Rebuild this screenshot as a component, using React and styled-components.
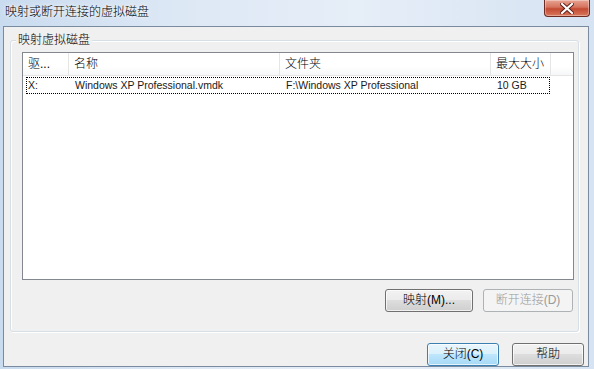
import React from "react";
import styled, { createGlobalStyle } from "styled-components";

const GlobalStyle = createGlobalStyle`
  html, body {
    margin: 0;
    padding: 0;
    overflow: hidden;
  }
  body {
    font-family: "Liberation Sans", "Noto Sans CJK SC", sans-serif;
    font-size: 12px;
    font-weight: 300;
    color: #000000;
  }
`;

const Window = styled.div`
  width: 594px;
  height: 369px;
  display: flex;
  flex-direction: column;
  background: linear-gradient(90deg, #c9dbef 0%, #dde8f5 30%, #e6eef8 60%, #d6e3f2 100%);
  overflow: hidden;
`;

const TitleBar = styled.div`
  height: 26px;
  display: flex;
  justify-content: space-between;
  align-items: flex-start;
  flex-shrink: 0;
`;

const TitleText = styled.div`
  padding-left: 5px;
  line-height: 24px;
  font-size: 12px;
  text-shadow: 0 0 6px #ffffff, 0 0 3px #ffffff;
`;

const CloseButton = styled.div`
  width: 44px;
  height: 16px;
  margin-right: 4px;
  border: 1px solid #6b2a22;
  border-top: none;
  border-radius: 0 0 4px 4px;
  background: linear-gradient(180deg, #e8a493 0%, #d4735e 45%, #c24a32 55%, #d9785c 100%);
  box-shadow: inset 0 0 0 1px rgba(255, 255, 255, 0.35);
  display: flex;
  align-items: center;
  justify-content: center;
`;

const Client = styled.div`
  margin: 0 5px 0 3px;
  height: 339px;
  border: 1px solid #7a8ba0;
  background: #f0f0f0;
  display: flex;
  flex-direction: column;
  flex-shrink: 0;
`;

const GroupBox = styled.div`
  position: relative;
  margin: 13px 9px 0 6px;
  height: 282px;
  border: 1px solid #d5dfe5;
  border-radius: 3px;
  box-shadow: inset 1px 1px 0 #ffffff, 1px 1px 0 #ffffff;
  padding: 11px 4px 11px 11px;
  display: flex;
  flex-direction: column;
`;

const GroupLabel = styled.div`
  position: absolute;
  top: -8px;
  left: 5px;
  padding: 0 2px;
  background: #f0f0f0;
  line-height: 14px;
  font-size: 12px;
`;

const ListView = styled.div`
  height: 226px;
  border: 1px solid #828790;
  background: #ffffff;
  display: flex;
  flex-direction: column;
`;

const HeaderRow = styled.div`
  display: flex;
  height: 22px;
  border-bottom: 1px solid #e5e5e5;
  background: linear-gradient(180deg, #ffffff 0%, #ffffff 60%, #f6f7f8 100%);
`;

const HeaderCell = styled.div`
  width: ${(p) => p.w}px;
  flex-shrink: 0;
  padding-left: 5px;
  box-sizing: border-box;
  border-right: 1px solid #e5e5e5;
  line-height: 23px;
  font-size: 12px;
  white-space: nowrap;
  overflow: hidden;
`;

const HeaderFill = styled.div`
  flex: 1;
`;

const Row = styled.div`
  display: flex;
  margin: 1px 0 0 3px;
  width: 524px;
  height: 17px;
  box-sizing: border-box;
  border: 1px dotted #000000;
`;

const Cell = styled.div`
  width: ${(p) => p.w}px;
  flex-shrink: 0;
  padding-left: ${(p) => p.pl || 5}px;
  box-sizing: border-box;
  line-height: 15px;
  font-size: 10.5px;
  color: #1a1a1a;
  white-space: nowrap;
  overflow: hidden;
`;

const ButtonRow = styled.div`
  display: flex;
  justify-content: flex-end;
  gap: 10px;
  margin-top: 9px;
  margin-right: 1px;
`;

const Button = styled.div`
  width: ${(p) => p.w || 88}px;
  height: 23px;
  box-sizing: border-box;
  border: 1px solid ${(p) => (p.disabled ? "#adb2b5" : p.primary ? "#3c7fb1" : "#707070")};
  border-radius: 3px;
  background: ${(p) =>
    p.disabled
      ? "#f4f4f4"
      : p.primary
      ? "linear-gradient(180deg, #eaf6fd 0%, #d9f0fc 50%, #bee6fd 50%, #a7d9f5 100%)"
      : "linear-gradient(180deg, #f2f2f2 0%, #ebebeb 50%, #dddddd 50%, #cfcfcf 100%)"};
  box-shadow: inset 0 0 0 1px ${(p) => (p.disabled ? "#f4f4f4" : "rgba(255,255,255,0.7)")};
  color: ${(p) => (p.disabled ? "#9a9a9a" : "#000000")};
  font-size: 12px;
  line-height: 21px;
  text-align: center;
  white-space: nowrap;
`;

const Footer = styled.div`
  display: flex;
  justify-content: flex-end;
  gap: 13px;
  margin-top: 11px;
  padding-right: 4px;
`;

const columns = [
  { w: 46, title: "驱..." },
  { w: 211, title: "名称" },
  { w: 211, title: "文件夹" },
  { w: 60, title: "最大大小" },
];

const rows = [
  { drive: "X:", name: "Windows XP Professional.vmdk", folder: "F:\\Windows XP Professional", size: "10 GB" },
];

function CloseGlyph() {
  return (
    <svg width="14" height="11" viewBox="0 0 14 11">
      <path
        d="M2 1 L12 10 M12 1 L2 10"
        stroke="#5a1d15"
        strokeWidth="4"
        strokeLinecap="square"
      />
      <path
        d="M2 1 L12 10 M12 1 L2 10"
        stroke="#ffffff"
        strokeWidth="2.2"
        strokeLinecap="square"
      />
    </svg>
  );
}

export default function App() {
  return (
    <>
      <GlobalStyle />
      <Window>
        <TitleBar>
          <TitleText>映射或断开连接的虚拟磁盘</TitleText>
          <CloseButton>
            <CloseGlyph />
          </CloseButton>
        </TitleBar>
        <Client>
          <GroupBox>
            <GroupLabel>映射虚拟磁盘</GroupLabel>
            <ListView>
              <HeaderRow>
                {columns.map((c) => (
                  <HeaderCell key={c.title} w={c.w}>
                    {c.title}
                  </HeaderCell>
                ))}
                <HeaderFill />
              </HeaderRow>
              {rows.map((r) => (
                <Row key={r.drive}>
                  <Cell w={43} pl={1}>{r.drive}</Cell>
                  <Cell w={211}>{r.name}</Cell>
                  <Cell w={211}>{r.folder}</Cell>
                  <Cell w={58}>{r.size}</Cell>
                </Row>
              ))}
            </ListView>
            <ButtonRow>
              <Button w={88}>映射(M)...</Button>
              <Button w={90} disabled>
                断开连接(D)
              </Button>
            </ButtonRow>
          </GroupBox>
          <Footer>
            <Button w={72} primary>
              关闭(C)
            </Button>
            <Button w={72}>帮助</Button>
          </Footer>
        </Client>
      </Window>
    </>
  );
}
